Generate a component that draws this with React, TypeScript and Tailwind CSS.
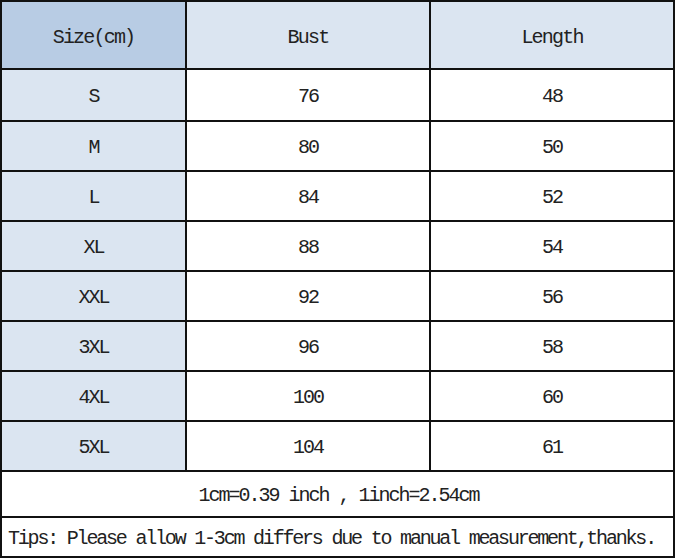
import React from "react";

const rows: [string, string, string][] = [
  ["S", "76", "48"],
  ["M", "80", "50"],
  ["L", "84", "52"],
  ["XL", "88", "54"],
  ["XXL", "92", "56"],
  ["3XL", "96", "58"],
  ["4XL", "100", "60"],
  ["5XL", "104", "61"],
];

const font = { fontFamily: '"Liberation Mono", "Noto Sans CJK SC", monospace' };

export default function App() {
  return (
    <div className="w-[676px] h-[559px] bg-white" style={font}>
      <div className="w-[675px] border-2 border-[#111] text-[#222] text-[20px] tracking-[-2px] leading-none">
        <div className="grid grid-cols-[185px_244px_242px] h-[68px] border-b-2 border-[#111]">
          <div className="flex items-center justify-center pt-[6px] bg-[#b8cce4] border-r-2 border-[#111] tracking-[-1.8px]">Size(cm)</div>
          <div className="flex items-center justify-center pt-[6px] bg-[#dbe5f1] border-r-2 border-[#111] tracking-[-1.8px]">Bust</div>
          <div className="flex items-center justify-center pt-[6px] bg-[#dbe5f1] tracking-[-1.8px]">Length</div>
        </div>
        {rows.map((r, i) => (
          <div
            key={r[0]}
            className={
              "grid grid-cols-[185px_244px_242px] border-b-2 border-[#111] " +
              (i === 0 ? "h-[52px]" : "h-[50px]")
            }
          >
            <div className="flex items-center justify-center pt-[4px] bg-[#dbe5f1] border-r-2 border-[#111]">{r[0]}</div>
            <div className="flex items-center justify-center pt-[4px] border-r-2 border-[#111]">{r[1]}</div>
            <div className="flex items-center justify-center pt-[4px]">{r[2]}</div>
          </div>
        ))}
        <div className="h-[46px] border-b-2 border-[#111] flex items-center justify-center pt-[4px] pl-[2px]">
          1cm=0.39 inch , 1inch=2.54cm
        </div>
        <div className="h-[38px] flex items-center pl-[6px] pt-[4px] tracking-[-2.2px]">
          Tips: Please allow 1-3cm differs due to manual measurement,thanks.
        </div>
      </div>
    </div>
  );
}
